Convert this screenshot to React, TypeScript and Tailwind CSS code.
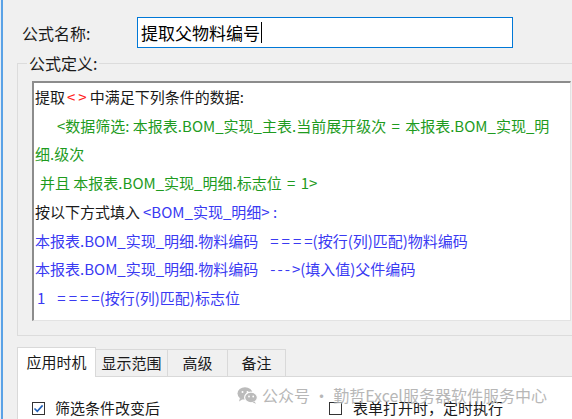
import React from "react";

function Check({ checked }: { checked: boolean }) {
  return (
    <div className="w-[13px] h-[13px] border border-[#333333] bg-white shrink-0 flex items-center justify-center">
      {checked && (
        <svg width="11" height="11" viewBox="0 0 11 11">
          <path d="M1.5 5.5 L4.3 8.3 L9.6 2.4" fill="none" stroke="#2160b8" strokeWidth="1.6" />
        </svg>
      )}
    </div>
  );
}

function WeChat() {
  return (
    <svg width="21" height="17" viewBox="0 0 21 17">
      <ellipse cx="8" cy="6.5" rx="7.5" ry="6.2" fill="#b4b4b4" />
      <path d="M3 11 L2 14.5 L6 12 Z" fill="#b4b4b4" />
      <ellipse cx="14" cy="10.5" rx="6.4" ry="5.3" fill="#b4b4b4" stroke="#ffffff" strokeWidth="1.2" />
      <path d="M17.5 14.5 L19 16.8 L15.5 15.3 Z" fill="#b4b4b4" />
      <circle cx="5.5" cy="5" r="1" fill="#ffffff" />
      <circle cx="10.5" cy="5" r="1" fill="#ffffff" />
      <circle cx="12" cy="9.5" r="0.9" fill="#ffffff" />
      <circle cx="16.2" cy="9.5" r="0.9" fill="#ffffff" />
    </svg>
  );
}

export default function App() {
  return (
    <div className="relative w-[572px] h-[419px] overflow-hidden bg-[#f0f0f0] flex font-['Noto_Sans_CJK_SC',sans-serif] text-[#1a1a1a]">
      <div className="w-px shrink-0 bg-[#e6edf5]" />
      <div className="w-[2px] shrink-0 bg-[#5aa2e6]" />
      <div className="flex-1 flex flex-col min-w-0">
        <div className="flex items-center mt-[17px] h-[31px] shrink-0">
          <span className="ml-[19px] w-[115px] text-[16px] leading-[20px]">公式名称:</span>
          <div className="w-[376px] h-[31px] border border-[#0078d7] bg-white flex items-center pl-[3px] text-[17px] leading-[22px] text-black">
            <span>提取父物料编号</span>
            <span className="inline-block w-px h-[21px] bg-black ml-px" />
          </div>
        </div>

        <fieldset className="mt-[6px] ml-[14px] w-[600px] shrink-0 border border-[#dcdcdc] pb-[14px]">
          <legend className="ml-[9px] px-[2px] text-[16px] leading-[18px]">公式定义:</legend>
          <div className="ml-[14px] mt-[9px] w-[539px] h-[240px] bg-white border-t-2 border-l-2 border-t-[#8c8c8c] border-l-[#8c8c8c] border-r border-b border-r-[#e3e3e3] border-b-[#e3e3e3] pl-px text-[15px] leading-[28.7px] whitespace-pre overflow-hidden">
            <div>
              <span className="text-[#1a1a1a]">提取</span>
              <span className="text-[#ff2020] pl-[2px] tracking-[3px]">&lt;&gt;</span>
              <span className="text-[#1a1a1a]">中满足下列条件的数据:</span>
            </div>
            <div className="pl-[22px] text-[#1e9b1e]">
              &lt;数据筛选: 本报表.BOM_实现_主表.当前展开级次 <span className="px-[2px]">=</span> 本报表.BOM_实现_明
            </div>
            <div className="text-[#1e9b1e]">细.级次</div>
            <div className="pl-[5px] text-[#1e9b1e]">
              并且 本报表.BOM_实现_明细.标志位 <span className="px-[2px]">=</span> 1&gt;
            </div>
            <div>
              <span className="text-[#1a1a1a]">按以下方式填入</span>
              <span className="text-[#3a3af2] pl-[3px]">&lt;BOM_实现_明细&gt; :</span>
            </div>
            <div className="text-[#3a3af2]">
              本报表.BOM_实现_明细.物料编码<span className="pl-[12px] tracking-[3px] -mr-[3px]">====</span>(按行(列)匹配)物料编码
            </div>
            <div className="text-[#3a3af2]">
              本报表.BOM_实现_明细.物料编码<span className="pl-[12px] tracking-[2px] -mr-[2px]">---&gt;</span>(填入值)父件编码
            </div>
            <div className="text-[#3a3af2] pl-[2px]">
              1<span className="pl-[12px] tracking-[3px] -mr-[3px]">====</span>(按行(列)匹配)标志位
            </div>
          </div>
        </fieldset>

        <div className="mt-[11px] ml-[14px] flex items-end h-[30px] shrink-0 text-[15px]">
          <div className="w-[79px] h-[30px] bg-white border border-b-0 border-[#d9d9d9] flex items-center justify-center">应用时机</div>
          <div className="w-[72px] h-[28px] bg-[#f0f0f0] border-t border-r border-b border-[#d9d9d9] flex items-center justify-center">显示范围</div>
          <div className="w-[60px] h-[28px] bg-[#f0f0f0] border-t border-r border-b border-[#d9d9d9] flex items-center justify-center">高级</div>
          <div className="w-[58px] h-[28px] bg-[#f0f0f0] border-t border-r border-b border-[#d9d9d9] flex items-center justify-center">备注</div>
          <div className="flex-1 h-[28px] border-b border-[#d9d9d9]" />
        </div>

        <div className="ml-[14px] flex-1 bg-white border-l border-[#d9d9d9]">
          <div className="mt-[21px] flex items-center text-[15px] leading-[20px]">
            <div className="w-[311px] flex items-center gap-[10px] pl-[14px]">
              <Check checked />
              <span>筛选条件改变后</span>
            </div>
            <div className="flex items-center gap-[11px]">
              <Check checked={false} />
              <span>表单打开时，定时执行</span>
            </div>
          </div>
        </div>
      </div>

      <div className="absolute left-[237px] top-[385px] flex items-center gap-[4px] opacity-90">
        <WeChat />
        <span className="text-[16px] leading-[20px] text-[#b0b0b0] whitespace-pre">公众号 · 勤哲Excel服务器软件服务中心</span>
      </div>
    </div>
  );
}
